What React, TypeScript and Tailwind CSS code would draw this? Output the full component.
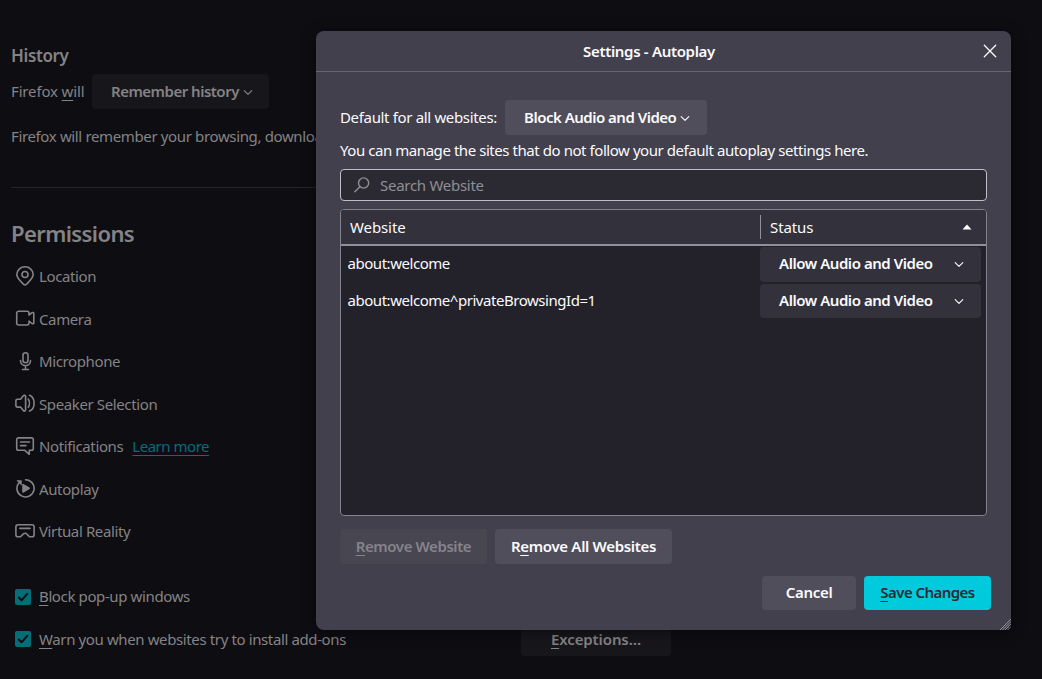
import React from "react";

const Chevron = ({ className = "" }: { className?: string }) => (
  <svg className={className} width="10" height="10" viewBox="0 0 10 10" fill="none" stroke="currentColor" strokeWidth="1.15" strokeLinecap="round" strokeLinejoin="round">
    <path d="M1.2 3.7 5 7.400 8.8 3.7" />
  </svg>
);

const Key = ({ children }: { children: React.ReactNode }) => (
  <span className="underline decoration-1 underline-offset-[3px] [text-decoration-skip-ink:none]">{children}</span>
);

const Icon = ({ children }: { children: React.ReactNode }) => (
  <svg width="20" height="20" viewBox="0 0 20 20" className="shrink-0" fill="none" stroke="currentColor" strokeWidth="1.6" strokeLinecap="round" strokeLinejoin="round">
    {children}
  </svg>
);

const permissions = [
  {
    label: "Location",
    icon: (
      <Icon>
        <path d="M10 19c-.5 0-1-.3-1.300-.6C5.500 15.200 1.800 12 1.800 8.500a8.200 7.700 0 0 1 16.400 0C18.200 12 14.500 15.200 11.300 18.400c-.3.300-.8.600-1.300.600Z" />
        <circle cx="10" cy="8.500" r="3" />
      </Icon>
    ),
  },
  {
    label: "Camera",
    icon: (
      <Icon>
        <path d="M14 7V5.200a2 2 0 0 0-2-2H3.700a2 2 0 0 0-2 2v9.800a2 2 0 0 0 2 2H12a2 2 0 0 0 2-2V13l3 2.500c.7.500 1.800.2 1.800-.6V5.300c0-.8-1.100-1.100-1.800-.6Z" />
      </Icon>
    ),
  },
  {
    label: "Microphone",
    icon: (
      <Icon>
        <rect x="8" y="1.800" width="5" height="10" rx="2.500" />
        <path d="M5.500 9.500c0 3 2.200 5.200 5 5.200s5-2.200 5-5.200M10.500 14.700v3.800M7.500 18.500h6" />
      </Icon>
    ),
  },
  {
    label: "Speaker Selection",
    icon: (
      <Icon>
        <path d="M.9 7.800a1.500 1.500 0 0 1 1.500-1.500H5.500L8.300 2.800c.9-.9 2.300-.5 2.300.8v13.200c0 1.300-1.400 1.700-2.300.8l-2.800-3.500H2.400a1.500 1.500 0 0 1-1.500-1.500Z" />
        <path d="M13.300 6.200c1.500 2.200 1.500 5.800 0 8M14.600 2.300c6 2.600 6 13.200 0 15.800" />
      </Icon>
    ),
  },
  {
    label: "Notifications",
    link: "Learn more",
    icon: (
      <Icon>
        <path d="M3.500 1.900h13a1.800 1.800 0 0 1 1.800 1.800v8.800a1.800 1.800 0 0 1-1.800 1.800h-2.200v4l-4.500-4H3.500a1.800 1.800 0 0 1-1.800-1.800V3.700a1.800 1.800 0 0 1 1.800-1.800ZM5.500 6h9M5.500 9.600h5.500" />
      </Icon>
    ),
  },
  {
    label: "Autoplay",
    icon: (
      <Icon>
        <path d="M10.500 1.700a8.600 8.600 0 1 1-6.900 3.500" />
        <path d="M1.300 2.300h5.400v5.400L4.600 5.700 3.500 4.600Z" fill="currentColor" stroke="none" />
        <path d="M8 6.600v7.400l6.200-3.700Z" fill="currentColor" />
      </Icon>
    ),
  },
  {
    label: "Virtual Reality",
    icon: (
      <Icon>
        <path d="M3 3.700h14a2.100 2.100 0 0 1 2.100 2.100v7.900a2.100 2.100 0 0 1-2.100 2.100h-2.600l-2.500-2.700a2.500 2.500 0 0 0-3.800 0l-2.500 2.700H3a2.100 2.100 0 0 1-2.100-2.100V5.800A2.100 2.100 0 0 1 3 3.700ZM4.900 7.400h10.200" />
      </Icon>
    ),
  },
];

const CheckRow = ({ children }: { children: React.ReactNode }) => (
  <label className="flex h-[42px] items-center pl-1">
    <span className="mr-2 flex size-4 items-center justify-center rounded-xs bg-[#006f78]">
      <svg width="16" height="16" viewBox="0 0 16 16" fill="none" stroke="#0e0d12" strokeWidth="2" strokeLinecap="round" strokeLinejoin="round">
        <path d="m3.800 8.500 2.700 2.800L12.300 4.800" />
      </svg>
    </span>
    <span>{children}</span>
  </label>
);

const sites = ["about:welcome", "about:welcome^privateBrowsingId=1"];

export default function App() {
  return (
    <div className="relative h-[679px] w-[1042px] overflow-hidden bg-[#0e0d12] font-['Noto_Sans',sans-serif] text-[15px] leading-5 tracking-[-0.38px] whitespace-nowrap text-[#848385]">
      <main className="flex flex-col pt-[42px] pl-[11px]">
        <h2 className="h-7 text-[17px] leading-7 font-semibold">History</h2>
        <div className="mt-1 flex h-[35px] items-center">
          <span className="w-[81px] pb-0.5 tracking-[-0.15px]">Firefox <Key>w</Key>ill</span>
          <button className="flex h-[35px] w-[177px] items-center rounded bg-[#17161b] pb-0.5 pl-[19px] font-semibold tracking-[-0.5px]">
            Remember history
            <Chevron className="mt-0.5 ml-1" />
          </button>
        </div>
        <p className="mt-[17px] tracking-[-0.36px]">Firefox will remember your browsing, downloa</p>
        <hr className="mt-[41px] w-[660px] border-[#252429]" />
        <h1 className="mt-[31px] h-7 text-[22px] leading-7 font-semibold tracking-[-0.6px]">Permissions</h1>
        <div className="mt-2 flex flex-col">
          {permissions.map((p) => (
            <div key={p.label} className="flex h-[42.5px] items-center pl-1">
              <span className="-mt-px mr-1">{p.icon}</span>
              <span>{p.label}</span>
              {p.link && <a className="ml-[9px] tracking-[-0.48px] text-[#006f78] underline decoration-1 underline-offset-[3px]">{p.link}</a>}
            </div>
          ))}
        </div>
        <div className="mt-[23px] flex flex-col">
          <CheckRow><span className="block pb-0.5"><Key>B</Key>lock pop-up windows</span></CheckRow>
          <div className="flex items-center">
            <div className="w-[510px]">
              <CheckRow><Key>W</Key>arn you when websites try to install add-ons</CheckRow>
            </div>
            <button className="h-[35px] w-[150px] rounded bg-[#17161b] font-semibold tracking-[-0.1px]"><Key>E</Key>xceptions…</button>
          </div>
        </div>
      </main>

      <section role="dialog" className="absolute top-[31px] left-[316px] flex h-[599px] w-[695px] flex-col rounded-lg bg-[#42404c] text-[#fbfbfe] shadow-[0_2px_14px_rgba(0,0,0,0.5)]">
        <header className="flex h-[41px] shrink-0 items-center border-b border-[#676570] px-[14px]">
          <h3 className="flex-1 pr-[15px] text-center font-semibold tracking-[-0.32px]">Settings - Autoplay</h3>
          <svg width="14" height="14" viewBox="0 0 14 14" stroke="currentColor" strokeWidth="1.300" strokeLinecap="round">
            <path d="M1.300 1.300 12.700 12.700M12.700 1.300 1.300 12.700" />
          </svg>
        </header>
        <div className="flex flex-1 flex-col px-6 pt-7">
          <div className="flex h-[35px] items-center">
            <span className="w-[165px] pb-0.5 tracking-[-0.34px]">Default for all websites:</span>
            <button className="flex h-[35px] w-[202px] items-center rounded bg-[#504e5a] pb-0.5 pl-[19px] font-semibold tracking-[-0.5px]">
              Block Audio and Video
              <Chevron className="mt-0.5 ml-1" />
            </button>
          </div>
          <p className="mt-[5px] tracking-[-0.44px]">You can manage the sites that do not follow your default autoplay settings here.</p>
          <div className="mt-[9px] flex h-8 w-[647px] items-center rounded border border-[#bfbfc9] bg-[#2b2a33] pl-[13px] tracking-[-0.28px] text-[#8f8e94]">
            <svg className="mr-2.5" width="16" height="16" viewBox="0 0 16 16" fill="none" stroke="currentColor" strokeWidth="1.400" strokeLinecap="round">
              <circle cx="9.600" cy="6" r="5.100" />
              <path d="M5.900 9.700.8 14.800" />
            </svg>
            Search Website
          </div>
          <div className="mt-2 flex h-[307px] w-[647px] flex-col overflow-hidden rounded border border-[#83828c] bg-[#23222b]">
            <div className="flex h-9 shrink-0 items-center border-b-2 border-[#8f8f9d] bg-[#33313b] tracking-[-0.1px]">
              <span className="w-[419px] pl-[9px]">Website</span>
              <span className="flex h-6 flex-1 items-center border-l border-[#8f8f9d] pr-[14px] pl-[9px]">
                <span className="flex-1">Status</span>
                <svg width="10" height="6" viewBox="0 0 10 6" fill="currentColor"><path d="M5 .5 9.500 5.500H.5Z" /></svg>
              </span>
            </div>
            <div className="flex flex-col gap-0.5 pt-px">
              {sites.map((s) => (
                <div key={s} className="flex h-[34.5px] items-center">
                  <span className="w-[419px] pb-0.5 pl-[6.500px] tracking-[-0.46px]">{s}</span>
                  <button className="flex h-full w-[221px] items-center justify-between rounded bg-[#33313b] pr-[17px] pb-0.5 pl-[19px] font-semibold tracking-[-0.45px]">
                    Allow Audio and Video
                    <Chevron className="mt-0.5" />
                  </button>
                </div>
              ))}
            </div>
          </div>
          <div className="mt-[13px] flex gap-2 font-semibold">
            <button className="h-[35px] w-[147px] rounded bg-[#484651] pb-0.5 tracking-[-0.42px] text-[#85838b]"><Key>R</Key>emove Website</button>
            <button className="h-[35px] w-[177px] rounded bg-[#504e5a] pb-0.5 tracking-[-0.32px]">R<Key>e</Key>move All Websites</button>
          </div>
          <div className="mt-3 -mr-1 flex justify-end gap-2 font-semibold">
            <button className="h-[34px] w-[94px] rounded bg-[#504e5a] pb-0.5 tracking-[-0.3px]">Cancel</button>
            <button className="h-[34px] w-[127px] rounded bg-[#00cadb] pb-0.5 tracking-[-0.55px] text-[#2b2a33]"><Key>S</Key>ave Changes</button>
          </div>
        </div>
        <svg className="absolute right-0 bottom-0" width="11" height="11" viewBox="0 0 11 11" stroke="#a3a2a8" strokeWidth=".8">
          <path d="M0 11 11 0M2.500 11 11 2.500M5 11 11 5M7.500 11 11 7.500" />
        </svg>
      </section>
    </div>
  );
}
